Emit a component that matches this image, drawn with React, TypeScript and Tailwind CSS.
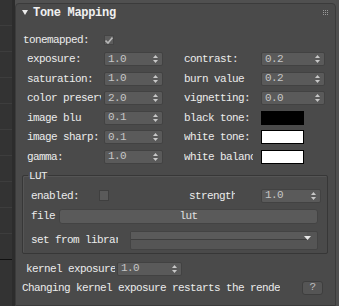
import React from 'react';

const font = { fontFamily: '"Liberation Mono", "DejaVu Sans Mono", monospace' };

function Spinner() {
  return (
    <svg width="5" height="8" viewBox="0 0 5 8" className="shrink-0">
      <path d="M2.5 0 L5 3 L0 3 Z" fill="#c8c8c8" />
      <path d="M0 5 L5 5 L2.5 8 Z" fill="#c8c8c8" />
    </svg>
  );
}

function NumField({ value, w }: { value: string; w: string }) {
  return (
    <div className={`${w} h-[14px] shrink-0 flex items-center justify-between pl-[3px] pr-[4px] bg-[#5a5a5a] border border-[#424242] rounded-[2px]`}>
      <span className="text-[#c6c6c6] leading-none">{value}</span>
      <Spinner />
    </div>
  );
}

function Label({ text, w, className = '' }: { text: string; w: string; className?: string }) {
  return (
    <div className={`${w} shrink-0 overflow-hidden whitespace-nowrap text-[#ececec] leading-[14px] ${className}`}>
      {text}
    </div>
  );
}

function Swatch({ color }: { color: 'black' | 'white' }) {
  return (
    <div
      className={`w-[43px] h-[14px] shrink-0 border border-black ${color === 'black' ? 'bg-black' : 'bg-white'}`}
    />
  );
}

function Row({ left, right }: { left: React.ReactNode; right: React.ReactNode }) {
  return (
    <div className="flex items-center h-[14px]">
      <div className="flex items-center w-[136px]">{left}</div>
      <div className="flex items-center ml-[21px]">{right}</div>
    </div>
  );
}

export default function App() {
  const stripLines = Array.from({ length: 10 });
  return (
    <div
      className="flex w-[339px] h-[306px] overflow-hidden bg-[#505050] text-[11px] tracking-[-0.6px]"
      style={font}
    >
      {/* left strip */}
      <div className="w-[15px] shrink-0 flex flex-col bg-[#2c2c2c]">
        {stripLines.map((_, i) => (
          <div key={i} className={`h-[26px] shrink-0 mr-[3px] border-b ${i === 9 ? 'border-[#111]' : 'border-[#3d3d3d]'} bg-[#333333]`} />
        ))}
        <div className="flex-1 mr-[3px] bg-[#333333]" />
      </div>

      {/* panel */}
      <div className="w-[321px] shrink-0 mt-[3px] rounded-t-[4px] border border-[#3b3b3b] bg-[#4a4a4a] flex flex-col">
        {/* header */}
        <div className="h-[17px] flex items-center pl-[6px] pr-[7px]">
          <svg width="6" height="5" viewBox="0 0 6 5">
            <path d="M0 0 L6 0 L3 5 Z" fill="#ececec" />
          </svg>
          <span className="ml-[5px] font-bold text-[12px] tracking-[-0.3px] text-[#f0f0f0] leading-none">Tone Mapping</span>
          <div className="ml-auto grid grid-cols-3 gap-[1px] mt-[-1px]">
            {Array.from({ length: 9 }).map((_, i) => (
              <div key={i} className="w-[1px] h-[1px] bg-[#9a9a9a]" />
            ))}
          </div>
        </div>

        {/* tonemapped */}
        <div className="flex items-center h-[14px] mt-[12px] pl-[7px]">
          <Label text="tonemapped:" w="w-[81px]" />
          <div className="w-[10px] h-[10px] bg-[#5c5c5c] border border-[#444] flex items-center justify-center">
            <svg width="8" height="7" viewBox="0 0 8 7">
              <path d="M0.5 3.5 L3 6 L7.5 0.5" stroke="#b8b8b8" strokeWidth="1.6" fill="none" />
            </svg>
          </div>
        </div>

        {/* parameter grid */}
        <div className="flex flex-col gap-[5.6px] mt-[5px] pl-[11px]">
          <Row
            left={<><Label text="exposure:" w="w-[77px]" /><NumField value="1.0" w="w-[59px]" /></>}
            right={<><Label text="contrast:" w="w-[77px]" /><NumField value="0.2" w="w-[64px]" /></>}
          />
          <Row
            left={<><Label text="saturation:" w="w-[77px]" /><NumField value="1.0" w="w-[59px]" /></>}
            right={<><Label text="burn value" w="w-[77px]" /><NumField value="0.2" w="w-[64px]" /></>}
          />
          <Row
            left={<><Label text="color preservation:" w="w-[74px]" className="mr-[3px]" /><NumField value="2.0" w="w-[59px]" /></>}
            right={<><Label text="vignetting:" w="w-[77px]" /><NumField value="0.0" w="w-[64px]" /></>}
          />
          <Row
            left={<><Label text="image blu" w="w-[77px]" /><NumField value="0.1" w="w-[59px]" /></>}
            right={<><Label text="black tone:" w="w-[77px]" /><Swatch color="black" /></>}
          />
          <Row
            left={<><Label text="image sharp:" w="w-[77px]" /><NumField value="0.1" w="w-[59px]" /></>}
            right={<><Label text="white tone:" w="w-[77px]" /><Swatch color="white" /></>}
          />
          <Row
            left={<><Label text="gamma:" w="w-[77px]" /><NumField value="1.0" w="w-[59px]" /></>}
            right={<><Label text="white balance:" w="w-[69px]" className="mr-[8px]" /><Swatch color="white" /></>}
          />
        </div>

        {/* LUT group */}
        <fieldset className="mt-[5px] ml-[6px] w-[306px] border border-[#373737] shadow-[inset_1px_1px_0_#555] rounded-[2px] pb-[3px]">
          <legend className="ml-[5px] px-[1px] text-[#ececec] leading-[14px]">LUT</legend>
          <div className="flex items-center h-[14px] mt-[6px] pl-[8px]">
            <Label text="enabled:" w="w-[68px]" />
            <div className="w-[10px] h-[11px] bg-[#5a5a5a] border border-[#3f3f3f]" />
            <Label text="strength" w="w-[46px]" className="ml-[80px]" />
            <div className="ml-[26px]">
              <NumField value="1.0" w="w-[60px]" />
            </div>
          </div>
          <div className="flex items-center h-[15px] mt-[6px] pl-[8px]">
            <Label text="file" w="w-[28px]" />
            <div className="w-[259px] h-[15px] rounded-[3px] bg-[#5a5a5a] border border-[#434343] flex items-center justify-center text-[#e0e0e0] leading-none">
              lut
            </div>
          </div>
          <div className="flex items-center h-[19px] mt-[7px] pl-[8px]">
            <Label text="set from library" w="w-[87px]" />
            <div className="ml-[12px] w-[188px] h-[19px] bg-[#555555] border border-[#434343] rounded-[2px] flex flex-col">
              <div className="h-[8px] bg-[#5a5a5a] border-b border-[#3e3e3e] mr-[10px]" />
              <div className="flex-1 flex items-start justify-end pr-[6px]">
                <svg width="7" height="5" viewBox="0 0 7 5" className="mt-[-4px]">
                  <path d="M0 0 L7 0 L3.5 4 Z" fill="#e8e8e8" />
                </svg>
              </div>
            </div>
          </div>
        </fieldset>

        {/* kernel exposure */}
        <div className="flex items-center h-[14px] mt-[8px] pl-[10px]">
          <Label text="kernel exposure:" w="w-[89px]" />
          <div className="ml-[2px]">
            <NumField value="1.0" w="w-[65px]" />
          </div>
        </div>

        {/* note */}
        <div className="flex items-center h-[14px] mt-[5px] pl-[6px]">
          <Label text="Changing kernel exposure restarts the render" w="w-[258px]" />
          <div className="ml-[22px] w-[21px] h-[14px] rounded-[3px] bg-[#555555] border border-[#3e3e3e] flex items-center justify-center text-[#bdbdbd] leading-none">
            ?
          </div>
        </div>
      </div>

      {/* right strip */}
      <div className="flex-1 bg-[#4f4f4f]" />
    </div>
  );
}
